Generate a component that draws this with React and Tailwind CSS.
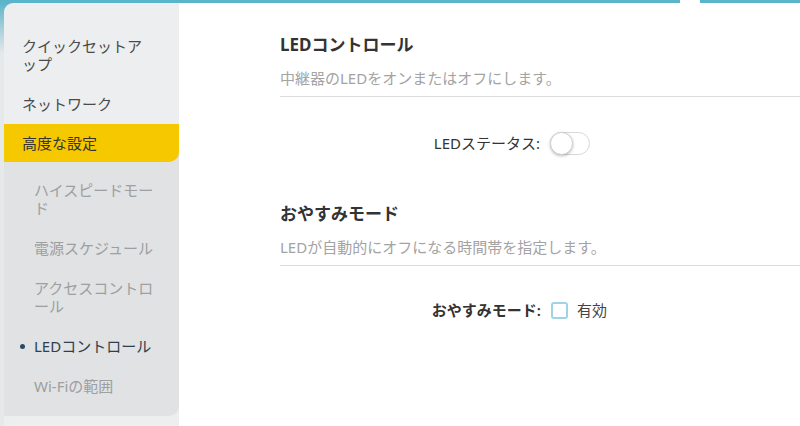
import React from 'react';

const font = { fontFamily: '"Noto Sans", "Noto Sans CJK JP", sans-serif' };

const topItems = [
  { label: 'クイックセットアップ' },
  { label: 'ネットワーク' },
];

const subItems = [
  { label: 'ハイスピードモード' },
  { label: '電源スケジュール' },
  { label: 'アクセスコントロール' },
  { label: 'LEDコントロール', active: true },
  { label: 'Wi-Fiの範囲' },
];

const Sidebar = () => (
  <aside className="w-[175px] shrink-0 bg-[#eceeef] rounded-tl-[9px] pt-[23px] flex flex-col">
    {topItems.map((item) => (
      <div key={item.label} className="pl-[18px] pr-[34px] py-[11px] text-[15px] leading-[18px] text-[#4a4a4a]">
        {item.label}
      </div>
    ))}
    <div className="bg-[#e0e2e3] rounded-br-[10px]">
      <div className="bg-[#f5c800] rounded-br-[10px] pl-[18px] pr-[30px] py-[10px] text-[15px] leading-[18px] text-[#333]">
        高度な設定
      </div>
      <div className="pt-[8px] pb-[10px]">
        {subItems.map((item) => (
          <div
            key={item.label}
            className={`relative pl-[30px] pr-[24px] py-[11px] text-[15px] leading-[18px] ${
              item.active ? 'text-[#2f3f4f]' : 'text-[#9d9fa1]'
            }`}
          >
            {item.active && (
              <span className="absolute left-[16px] top-[18px] w-[5px] h-[5px] rounded-full bg-[#2b4a66]" />
            )}
            {item.label}
          </div>
        ))}
      </div>
    </div>
    <div className="flex-1" />
  </aside>
);

const Toggle = () => (
  <div className="relative w-[40px] h-[23px] rounded-full bg-white border border-[#d8d8d8]">
    <span className="absolute left-[-1px] top-[-1px] w-[23px] h-[23px] rounded-full bg-white border border-[#d0d0d0] shadow-[0_1px_3px_rgba(0,0,0,0.25)]" />
  </div>
);

const Section = ({ title, desc, children, headTop, rowTop }) => (
  <section>
    <h2 className={`${headTop} text-[17px] leading-[24px] font-bold text-[#333]`}>{title}</h2>
    <p className="mt-[10px] pb-[7px] border-b border-[#dcdcdc] text-[15px] leading-[22px] text-[#a3a3a3]">{desc}</p>
    <div className={`${rowTop} flex items-center h-[24px]`}>{children}</div>
  </section>
);

export default function App() {
  return (
    <div style={font} className="w-[800px] h-[426px] overflow-hidden bg-white flex flex-col">
      <div className="flex h-[3px] shrink-0">
        <div className="w-[680px] bg-[#5ab5cb]" />
        <div className="w-[20px] bg-white" />
        <div className="flex-1 bg-[#5ab5cb]" />
      </div>
      <div className="flex flex-1 min-h-0">
        <div className="pl-[4px] flex bg-linear-to-b from-[#5ab5cb] from-0% to-[#e6e9ea] to-[12%]">
          <Sidebar />
        </div>
        <main className="flex-1 bg-white pl-[101px] pt-[30px]">
          <Section title="LEDコントロール" desc="中継器のLEDをオンまたはオフにします。" headTop="" rowTop="mt-[34px]">
            <div className="w-[270px] text-right pr-[10px] text-[15px] text-[#333]">LEDステータス:</div>
            <Toggle />
          </Section>
          <Section title="おやすみモード" desc="LEDが自動的にオフになる時間帯を指定します。" headTop="mt-[47px]" rowTop="mt-[32px]">
            <div className="w-[271px] text-right pr-[10px] text-[15px] font-semibold text-[#333]">おやすみモード:</div>
            <span className="w-[17px] h-[17px] rounded-[3px] border-2 border-[#9fd3e6] bg-white" />
            <span className="ml-[9px] text-[15px] text-[#444]">有効</span>
          </Section>
        </main>
      </div>
    </div>
  );
}
